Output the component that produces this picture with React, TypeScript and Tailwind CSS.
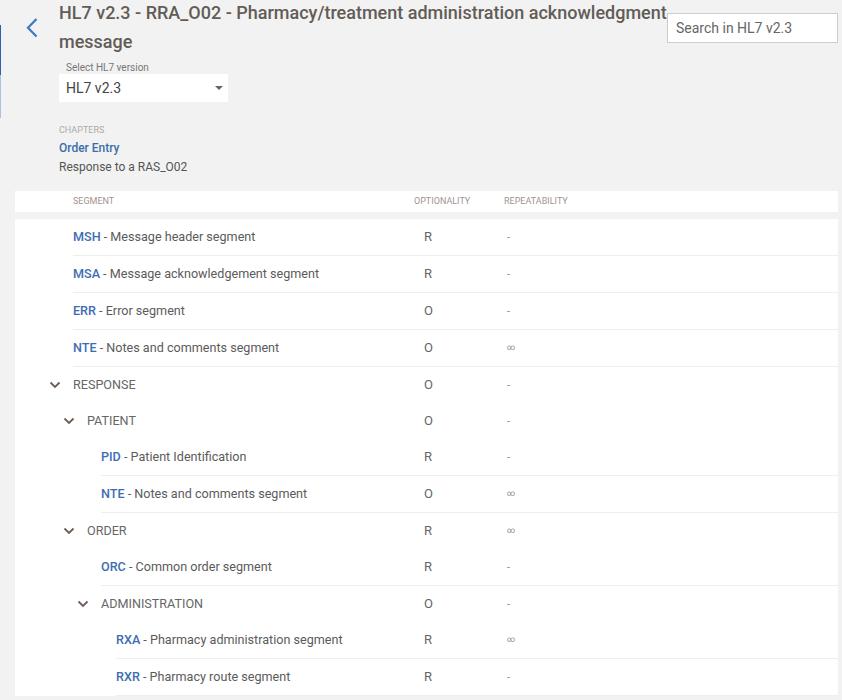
import React from "react";

type Row =
  | { kind: "seg"; level: number; code: string; name: string; opt: string; rep: string }
  | { kind: "group"; level: number; name: string; opt: string; rep: string };

const rows: Row[] = [
  { kind: "seg", level: 0, code: "MSH", name: "Message header segment", opt: "R", rep: "-" },
  { kind: "seg", level: 0, code: "MSA", name: "Message acknowledgement segment", opt: "R", rep: "-" },
  { kind: "seg", level: 0, code: "ERR", name: "Error segment", opt: "O", rep: "-" },
  { kind: "seg", level: 0, code: "NTE", name: "Notes and comments segment", opt: "O", rep: "∞" },
  { kind: "group", level: 0, name: "RESPONSE", opt: "O", rep: "-" },
  { kind: "group", level: 1, name: "PATIENT", opt: "O", rep: "-" },
  { kind: "seg", level: 2, code: "PID", name: "Patient Identification", opt: "R", rep: "-" },
  { kind: "seg", level: 2, code: "NTE", name: "Notes and comments segment", opt: "O", rep: "∞" },
  { kind: "group", level: 1, name: "ORDER", opt: "R", rep: "∞" },
  { kind: "seg", level: 2, code: "ORC", name: "Common order segment", opt: "R", rep: "-" },
  { kind: "group", level: 2, name: "ADMINISTRATION", opt: "O", rep: "-" },
  { kind: "seg", level: 3, code: "RXA", name: "Pharmacy administration segment", opt: "R", rep: "∞" },
  { kind: "seg", level: 3, code: "RXR", name: "Pharmacy route segment", opt: "R", rep: "-" },
];

const indent = ["pl-[58px]", "pl-[72px]", "pl-[86px]", "pl-[101px]"];

function Chevron() {
  return (
    <svg width="12" height="8" viewBox="0 0 12 8" className="-ml-[24px] mr-[12px] shrink-0">
      <path d="M1.5 1.5 L6 6 L10.5 1.5" fill="none" stroke="#6b5e55" strokeWidth="1.8" />
    </svg>
  );
}

function Values({ opt, rep }: { opt: string; rep: string }) {
  return (
    <>
      <div className="w-[90px] pl-[10px] text-[13px] text-[#666]">{opt}</div>
      <div className="w-[334px] pl-[3px] flex items-center text-[#888]">
        {rep === "∞" ? (
          <span className="text-[8px] leading-none">∞</span>
        ) : (
          <span className="text-[11px] leading-none">{rep}</span>
        )}
      </div>
    </>
  );
}

function TableRow({ row }: { row: Row }) {
  if (row.kind === "group") {
    return (
      <div className={`flex ${indent[row.level]}`}>
        <div className="flex-1 flex items-center h-[36px]">
          <div className="flex-1 flex items-center text-[12.6px] text-[#666]">
            <Chevron />
            {row.name}
          </div>
          <Values opt={row.opt} rep={row.rep} />
        </div>
      </div>
    );
  }
  return (
    <div className={`flex ${indent[row.level]}`}>
      <div className="flex-1 flex items-center h-[37px] border-b border-[#eeeeee]">
        <div className="flex-1 text-[12.6px] text-[#5b5b5b]">
          <span className="font-medium text-[#3d6db3]">{row.code}</span> - {row.name}
        </div>
        <Values opt={row.opt} rep={row.rep} />
      </div>
    </div>
  );
}

export default function App() {
  return (
    <div className="min-h-[700px] bg-[#f2f2f2] flex font-['Roboto',sans-serif]">
      <div className="w-px flex flex-col shrink-0">
        <div className="h-[25px]" />
        <div className="h-[50px] bg-[#2f62ad]" />
        <div className="h-[43px] bg-[#a9c2e3]" />
      </div>

      <div className="flex-1 pl-[14px] pr-[4px]">
        <div className="flex">
          <div className="w-[44px] shrink-0">
            <svg width="12" height="20" viewBox="0 0 12 20" className="ml-[11px] mt-[18px]">
              <path d="M10.5 1 L2 9.8 L10.5 18.6" fill="none" stroke="#3b78c4" strokeWidth="2.2" />
            </svg>
          </div>
          <h1 className="flex-1 -mt-[2px] text-[18px] leading-[29px] font-medium text-[#625c57]">
            HL7 v2.3 - RRA_O02 - Pharmacy/treatment administration acknowledgment message
          </h1>
          <div className="w-[171px] h-[30px] mt-[13px] shrink-0 bg-white border border-[#cccccc] flex items-center pl-[8px] text-[14px] text-[#666]">
            Search in HL7 v2.3
          </div>
        </div>

        <div className="ml-[44px]">
          <div className="mt-[6px] pl-[7px] text-[10px] leading-[12px] text-[#777]">Select HL7 version</div>
          <div className="w-[169px] h-[28px] bg-white flex items-center justify-between pl-[7px] pr-[5px]">
            <span className="text-[14px] text-[#444] mt-[1px]">HL7 v2.3</span>
            <svg width="8" height="4" viewBox="0 0 8 4">
              <polygon points="0,0 8,0 4,4" fill="#666" />
            </svg>
          </div>
          <div className="mt-[22px] text-[9px] leading-[12px] text-[#aaa]">CHAPTERS</div>
          <div className="mt-[3px] text-[12px] leading-[18px] font-medium text-[#3a6ea8]">Order Entry</div>
          <div className="mt-[1px] text-[12px] leading-[18px] text-[#555]">Response to a RAS_O02</div>
        </div>

        <div className="mt-[15px] h-[21px] bg-white flex items-center text-[9px] uppercase text-[#a09590]">
          <div className="flex-1 pl-[58px]">Segment</div>
          <div className="w-[90px]">Optionality</div>
          <div className="w-[334px]">Repeatability</div>
        </div>

        <div className="mt-[7px] bg-white">
          {rows.map((row, i) => (
            <TableRow key={i} row={row} />
          ))}
        </div>
      </div>
    </div>
  );
}
